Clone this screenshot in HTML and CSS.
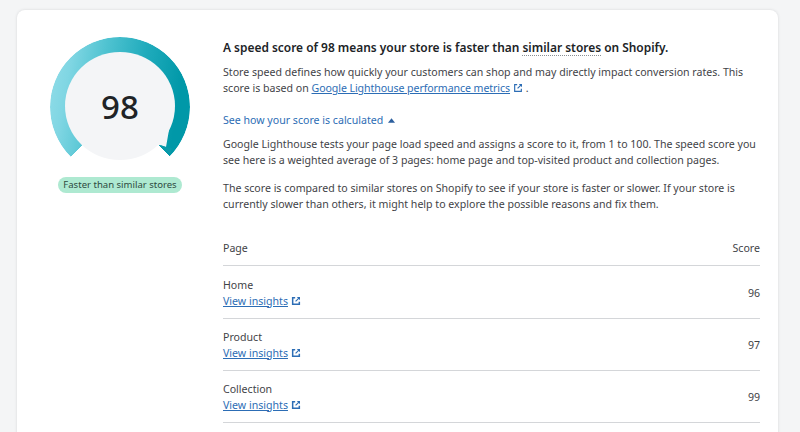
FILE: index.html
```html
<!DOCTYPE html>
<html lang="en">
<head>
<meta charset="utf-8">
<title>Speed score</title>
<link rel="stylesheet" href="styles.css">
</head>
<body>
<main class="card">
  <section class="score">
    <div class="gauge">
      <div class="arc"></div>
      <div class="dial">98</div>
      <svg class="tip" viewBox="0 0 30 40" width="30" height="40" aria-hidden="true"><path d="M15 5 L19 10 L16 27 L10 25 L5 25 Z" fill="#f4f5f7"/><path d="M10 25 L16 27 L22 28 L20 35 Z" fill="#0a99a9"/></svg>
    </div>
    <span class="badge">Faster than similar stores</span>
  </section>
  <section class="detail">
    <h1 class="title">A speed score of 98 means your store is faster than <span class="dotted">similar stores</span> on Shopify.</h1>
    <p class="para">Store speed defines how quickly your customers can shop and may directly impact conversion rates. This<br>score is based on <a class="link metrics" href="#">Google Lighthouse performance metrics</a><svg class="ext" viewBox="0 0 12 12" width="10" height="10" aria-hidden="true"><path d="M5 2H2v8h8V7" fill="none" stroke="#2c6db5" stroke-width="1.4"/><path d="M7 1.2h3.8V5L9.4 3.6 6 7 5 6l3.4-3.4z" fill="#2c6db5"/></svg> .</p>
    <div class="toggle">See how your score is calculated <svg class="caret" viewBox="0 0 8 5" width="7" height="5" aria-hidden="true"><path d="M0 5L4 0l4 5z" fill="#2c5f9e"/></svg></div>
    <p class="para explain">Google Lighthouse tests your page load speed and assigns a score to it, from 1 to 100. The speed score you<br>see here is a weighted average of 3 pages: home page and top-visited product and collection pages.</p>
    <p class="para second">The score is compared to similar stores on Shopify to see if your store is faster or slower. If your store is<br>currently slower than others, it might help to explore the possible reasons and fix them.</p>
    <div class="table">
      <div class="row head"><span>Page</span><span>Score</span></div>
      <div class="row">
        <div class="cell"><span>Home</span><span><a class="link" href="#">View insights</a><svg class="ext" viewBox="0 0 12 12" width="10" height="10" aria-hidden="true"><path d="M5 2H2v8h8V7" fill="none" stroke="#2c6db5" stroke-width="1.8"/><path d="M7 1.2h3.8V5L9.4 3.6 6 7 5 6l3.4-3.4z" fill="#2c6db5"/></svg></span></div>
        <span>96</span>
      </div>
      <div class="row">
        <div class="cell"><span>Product</span><span><a class="link" href="#">View insights</a><svg class="ext" viewBox="0 0 12 12" width="10" height="10" aria-hidden="true"><path d="M5 2H2v8h8V7" fill="none" stroke="#2c6db5" stroke-width="1.8"/><path d="M7 1.2h3.8V5L9.4 3.6 6 7 5 6l3.4-3.4z" fill="#2c6db5"/></svg></span></div>
        <span>97</span>
      </div>
      <div class="row">
        <div class="cell"><span>Collection</span><span><a class="link" href="#">View insights</a><svg class="ext" viewBox="0 0 12 12" width="10" height="10" aria-hidden="true"><path d="M5 2H2v8h8V7" fill="none" stroke="#2c6db5" stroke-width="1.8"/><path d="M7 1.2h3.8V5L9.4 3.6 6 7 5 6l3.4-3.4z" fill="#2c6db5"/></svg></span></div>
        <span>99</span>
      </div>
    </div>
  </section>
</main>
</body>
</html>
```
FILE: styles.css
```css
html, body { margin: 0; height: 432px; overflow: hidden; background: #f4f5f6; }
body {
  padding: 10px 22px 0 17px;
  box-sizing: border-box;
  font-family: "Noto Sans", "Open Sans", sans-serif;
  font-size: 10.6px;
  line-height: 16px;
  color: #3f4347;
}
.card {
  display: flex;
  height: 430px;
  overflow: hidden;
  background: #fff;
  border-radius: 8px;
  box-shadow: 0 0 3px rgba(60, 60, 70, .16);
  padding: 26px 18px 0 33px;
  box-sizing: border-box;
}
.score { width: 140px; flex: none; display: flex; flex-direction: column; align-items: center; gap: 17px; }
.gauge { position: relative; width: 140px; height: 124px; }
.arc {
  position: absolute; left: 0; top: 1px; width: 140px; height: 140px; border-radius: 50%;
  background: linear-gradient(100deg, #94dee9 0%, #80d6e3 15%, #50c3d1 35%, #20abbc 60%, #0098a8 85%);
  -webkit-mask: conic-gradient(from 225deg, #000 0deg, #000 270deg, transparent 270deg);
  mask: conic-gradient(from 225deg, #000 0deg, #000 270deg, transparent 270deg);
}
.tip { position: absolute; left: 100px; top: 84px; }
.dial {
  position: absolute; left: 15px; top: 16px; width: 110px; height: 108px; border-radius: 50%;
  background: #f4f5f7; display: flex; align-items: center; justify-content: center;
  font-size: 33px; font-weight: 500; line-height: 1; color: #202326;
}
.badge {
  background: #aee9d1; border-radius: 9px; padding: 0 5px; height: 16px; white-space: nowrap;
  font-size: 9.55px; line-height: 16px; color: #2d4a3f;
}
.detail { margin-left: 33px; flex: 1; min-width: 0; }
.title { margin: 1px 0 0; font-size: 11.93px; line-height: 20px; font-weight: 600; color: #202326; }
.dotted { border-bottom: 1px dotted #8a8f94; }
.para { margin: 7px 0 0; }
.link { color: #2c6db5; text-decoration: underline; }
.metrics { letter-spacing: -.08px; }
.ext { vertical-align: -1px; margin-left: 3px; }
.toggle { margin-top: 16px; color: #2c6db5; }
.caret { margin-left: 2px; vertical-align: 1px; }
.explain { margin-top: 8px; }
.second { margin-top: 12px; }
.table { margin-top: 18px; }
.row {
  display: flex; justify-content: space-between; align-items: center;
  height: 52px; box-sizing: border-box; border-bottom: 1px solid #d4d6d9;
}
.row.head { height: 36px; margin-bottom: 1px; }
.cell { display: flex; flex-direction: column; }
```
